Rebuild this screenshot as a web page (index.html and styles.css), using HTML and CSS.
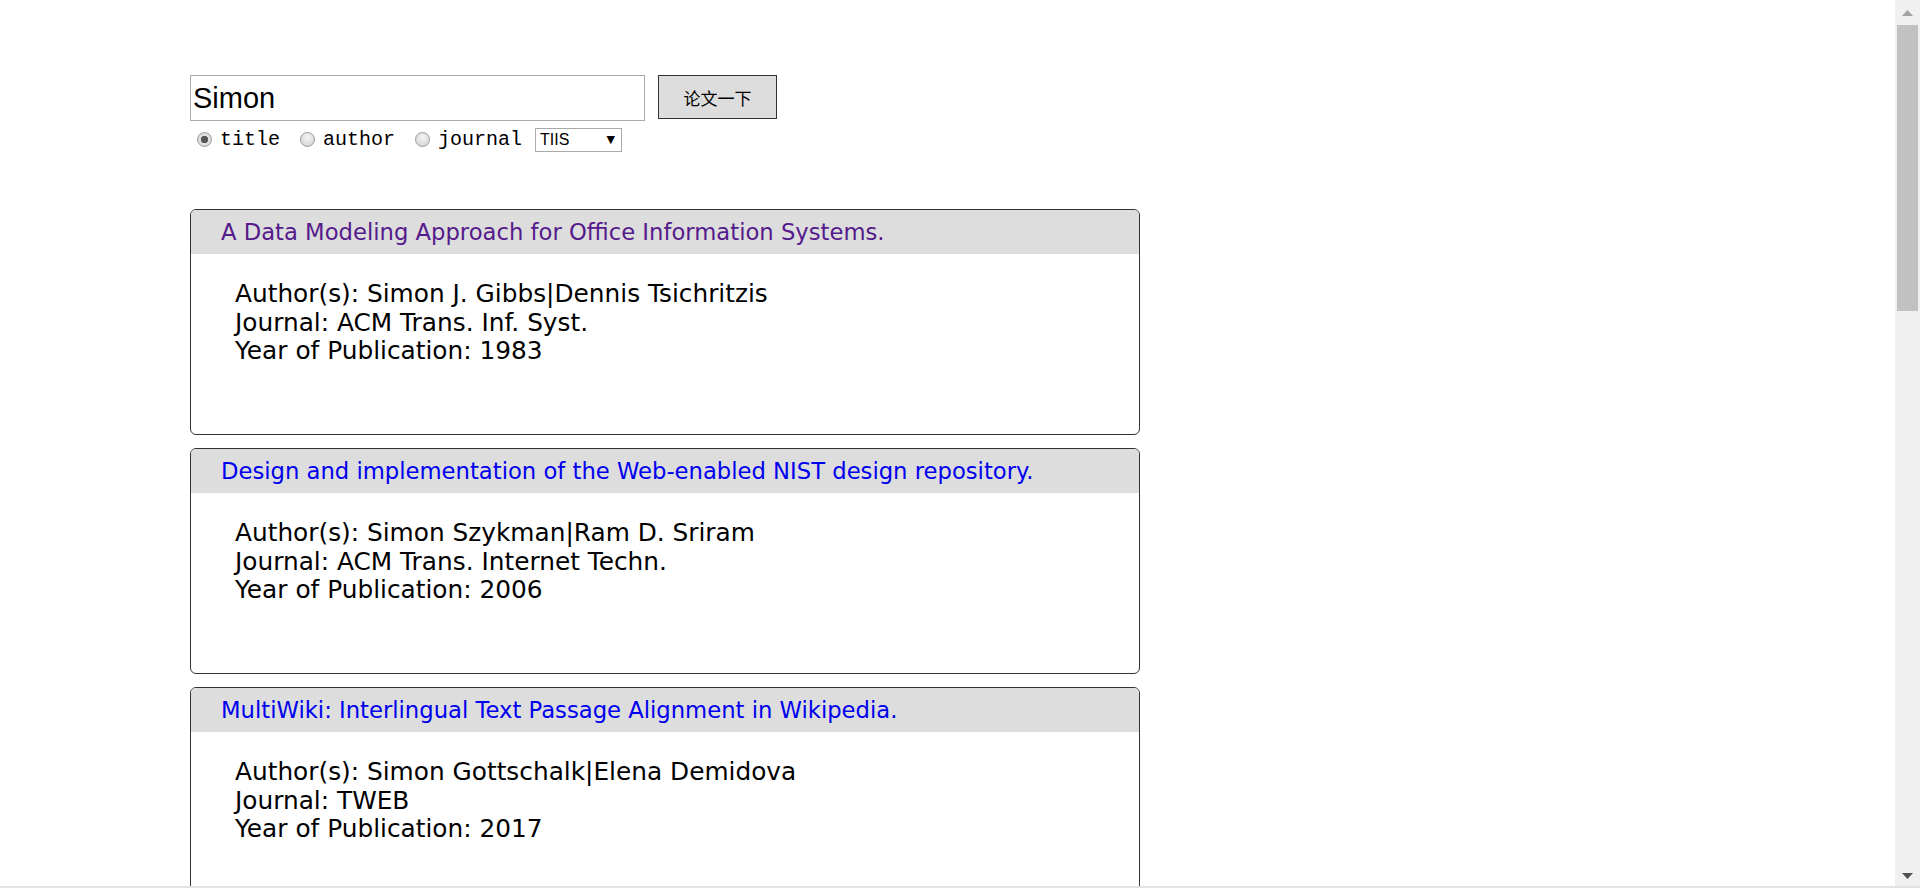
FILE: index.html
```html
<!DOCTYPE html>
<html lang="zh">
<head>
<meta charset="utf-8">
<title>论文搜索</title>
<link rel="stylesheet" href="styles.css">
</head>
<body>
<div class="page">
  <form class="search">
    <div class="search-row">
      <input class="query" type="text" value="Simon">
      <button class="submit" type="button">论文一下</button>
    </div>
    <div class="options">
      <label class="opt"><input class="radio" type="radio" name="field" checked><span>title</span></label>
      <label class="opt"><input class="radio" type="radio" name="field"><span>author</span></label>
      <label class="opt last"><input class="radio" type="radio" name="field"><span>journal</span></label>
      <span class="select-wrap"><select class="journal"><option>TIIS</option><option>TWEB</option><option>TOIS</option></select></span>
    </div>
  </form>

  <div class="results">
    <div class="card">
      <div class="card-head"><a class="title visited" href="#">A Data Modeling Approach for Office Information Systems.</a></div>
      <div class="card-body">
        <div>Author(s): Simon J. Gibbs|Dennis Tsichritzis</div>
        <div>Journal: ACM Trans. Inf. Syst.</div>
        <div>Year of Publication: 1983</div>
      </div>
    </div>
    <div class="card">
      <div class="card-head"><a class="title" href="#">Design and implementation of the Web-enabled NIST design repository.</a></div>
      <div class="card-body">
        <div>Author(s): Simon Szykman|Ram D. Sriram</div>
        <div>Journal: ACM Trans. Internet Techn.</div>
        <div>Year of Publication: 2006</div>
      </div>
    </div>
    <div class="card">
      <div class="card-head"><a class="title" href="#">MultiWiki: Interlingual Text Passage Alignment in Wikipedia.</a></div>
      <div class="card-body">
        <div>Author(s): Simon Gottschalk|Elena Demidova</div>
        <div>Journal: TWEB</div>
        <div>Year of Publication: 2017</div>
      </div>
    </div>
    <div class="card">
      <div class="card-head"><a class="title" href="#">Evaluating the Effectiveness of Personalized Web Search.</a></div>
      <div class="card-body">
        <div>Author(s): Simon Hunt|Mark Levene</div>
        <div>Journal: ACM Trans. Inf. Syst.</div>
        <div>Year of Publication: 2009</div>
      </div>
    </div>
    <div class="card">
      <div class="card-head"><a class="title" href="#">Interactive Gaze-Based Selection in Mobile Interfaces.</a></div>
      <div class="card-body">
        <div>Author(s): Simon Voelker|Jan Borchers</div>
        <div>Journal: TIIS</div>
        <div>Year of Publication: 2015</div>
      </div>
    </div>
    <div class="card">
      <div class="card-head"><a class="title" href="#">Characterizing Web Page Revisitation Patterns.</a></div>
      <div class="card-body">
        <div>Author(s): Simon Harper|Yeliz Yesilada</div>
        <div>Journal: TWEB</div>
        <div>Year of Publication: 2012</div>
      </div>
    </div>
    <div class="card">
      <div class="card-head"><a class="title" href="#">A Probabilistic Model for Retrieval of Structured Documents.</a></div>
      <div class="card-body">
        <div>Author(s): Simon Dennis|Peter Bruza</div>
        <div>Journal: ACM Trans. Inf. Syst.</div>
        <div>Year of Publication: 2004</div>
      </div>
    </div>
    <div class="card">
      <div class="card-head"><a class="title" href="#">Adaptive User Interfaces for Intelligent Tutoring Systems.</a></div>
      <div class="card-body">
        <div>Author(s): Simon Stumpf|Margaret Burnett</div>
        <div>Journal: TIIS</div>
        <div>Year of Publication: 2011</div>
      </div>
    </div>
    <div class="card">
      <div class="card-head"><a class="title" href="#">Scalable Crawling of Dynamic Web Applications.</a></div>
      <div class="card-body">
        <div>Author(s): Simon Razniewski|Werner Nutt</div>
        <div>Journal: ACM Trans. Internet Techn.</div>
        <div>Year of Publication: 2014</div>
      </div>
    </div>
    <div class="card">
      <div class="card-head"><a class="title" href="#">Query Expansion Using Term Relationships in Language Models.</a></div>
      <div class="card-body">
        <div>Author(s): Simon Lacoste|Jian-Yun Nie</div>
        <div>Journal: ACM Trans. Inf. Syst.</div>
        <div>Year of Publication: 2008</div>
      </div>
    </div>
  </div>
</div>

<div class="scrollbar" aria-hidden="true">
  <div class="sb-button">
    <svg width="11" height="6" viewBox="0 0 11 6"><polygon points="0,6 11,6 5.5,0" fill="#a3a3a3"/></svg>
  </div>
  <div class="sb-track">
    <div class="sb-thumb"></div>
  </div>
  <div class="sb-button">
    <svg width="11" height="6" viewBox="0 0 11 6"><polygon points="0,0 11,0 5.5,6" fill="#505050"/></svg>
  </div>
</div>
<div class="frame-bottom" aria-hidden="true"></div>
</body>
</html>
```

FILE: styles.css
```css
html {
  background: #ffffff;
}

body {
  margin: 0;
  font-family: "DejaVu Sans", Verdana, sans-serif;
  color: #000;
}

.page {
  padding: 75px 0 17px 190px;
}

/* search form */
.search-row {
  display: flex;
  align-items: flex-start;
  gap: 13px;
}

.query {
  box-sizing: border-box;
  width: 455px;
  height: 46px;
  margin: 0;
  padding: 0 2px;
  border: 1px solid #a9a9a9;
  font-family: "Liberation Sans", Arial, sans-serif;
  font-size: 29px;
  color: #000;
  outline: none;
}

.submit {
  box-sizing: border-box;
  width: 119px;
  height: 44px;
  margin: 0;
  padding: 0;
  border: 1px solid #333;
  background: #dddddd;
  font-family: "Noto Sans CJK SC", "Liberation Sans", sans-serif;
  font-size: 17px;
  color: #000;
}

.options {
  display: flex;
  align-items: center;
  height: 25px;
  margin-top: 6px;
  padding-left: 7px;
}

.opt {
  display: flex;
  align-items: center;
  margin-right: 20px;
  font-family: "Liberation Mono", "Courier New", monospace;
  font-size: 20px;
  color: #000;
}

.opt.last {
  margin-right: 13px;
}

.radio {
  -webkit-appearance: none;
  appearance: none;
  box-sizing: border-box;
  width: 15px;
  height: 15px;
  margin: 0 8px 0 0;
  border: 1px solid #9a9a9a;
  border-radius: 50%;
  background: radial-gradient(circle at 50% 35%, #f4f4f4 0%, #dadada 70%, #cfcfcf 100%);
}

.radio:checked {
  background: radial-gradient(circle, #555 0, #555 3.4px, #e2e2e2 4px, #d2d2d2 100%);
}

.select-wrap {
  position: relative;
  display: inline-block;
}

.select-wrap::after {
  content: "▼";
  position: absolute;
  right: 7px;
  top: 5px;
  font-family: "DejaVu Sans", sans-serif;
  font-size: 11px;
  color: #000;
  pointer-events: none;
}

.journal {
  -webkit-appearance: none;
  appearance: none;
  box-sizing: border-box;
  width: 87px;
  height: 24px;
  margin: 0;
  padding: 0 0 0 4px;
  border: 1px solid #a9a9a9;
  border-radius: 0;
  background: #fff;
  font-family: "Liberation Sans", Arial, sans-serif;
  font-size: 16px;
  color: #000;
}

/* results */
.results {
  margin-top: 57px;
}

.card {
  box-sizing: border-box;
  width: 950px;
  height: 226px;
  margin-bottom: 13px;
  border: 1px solid #333;
  border-radius: 6px;
  overflow: hidden;
}

.card-head {
  display: flex;
  align-items: center;
  height: 44px;
  padding-left: 30px;
  background: #dddddd;
}

.title {
  font-size: 22.7px;
  color: #0000ee;
  text-decoration: none;
}

.title.visited {
  color: #551a8b;
}

.card-body {
  padding: 26px 0 0 44px;
  font-size: 24.8px;
  line-height: 28.5px;
}

/* window scrollbar (drawn over the page edge) */
.scrollbar {
  position: fixed;
  top: 0;
  right: 0;
  width: 25px;
  height: 888px;
  display: flex;
  flex-direction: column;
  background: #f0f0f0;
}

.sb-button {
  display: flex;
  align-items: center;
  justify-content: center;
  height: 25px;
  flex: none;
}

.sb-track {
  flex: 1;
  padding: 0 2px;
}

.sb-thumb {
  height: 286px;
  background: #c1c1c1;
}

.frame-bottom {
  position: fixed;
  left: 0;
  right: 0;
  bottom: 0;
  height: 2px;
  background: #e2e2e2;
}
```
